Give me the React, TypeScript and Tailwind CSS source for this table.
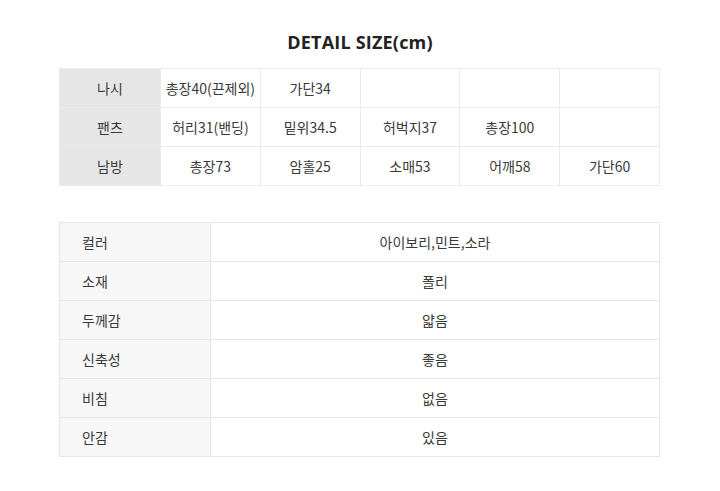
const sizeRows = [
  { name: '나시', cells: ['총장40(끈제외)', '가단34', '', '', ''] },
  { name: '팬츠', cells: ['허리31(밴딩)', '밑위34.5', '허벅지37', '총장100', ''] },
  { name: '남방', cells: ['총장73', '암홀25', '소매53', '어깨58', '가단60'] },
];

const infoRows = [
  ['컬러', '아이보리,민트,소라'],
  ['소재', '폴리'],
  ['두께감', '얇음'],
  ['신축성', '좋음'],
  ['비침', '없음'],
  ['안감', '있음'],
];

export default function App() {
  return (
    <div
      className="w-[720px] h-[491px] bg-white text-[#3a3a3a]"
      style={{ fontFamily: '"Noto Sans CJK KR", "Noto Sans", sans-serif' }}
    >
      <h1
        className="pt-[31px] h-[68px] text-center text-[18px] font-bold leading-[22px] tracking-[0.2px] text-[#222]"
        style={{ fontFamily: '"Open Sans", "Noto Sans CJK KR", sans-serif' }}
      >
        DETAIL SIZE(cm)
      </h1>

      <table className="ml-[59px] w-[601px] border-collapse table-fixed text-[14px]">
        <tbody>
          {sizeRows.map((row) => (
            <tr key={row.name} className="h-[39px]">
              <td className="w-[101px] bg-[#e6e6e6] border border-[#ebebeb] text-center">{row.name}</td>
              {row.cells.map((c, i) => (
                <td key={i} className="border border-[#ebebeb] text-center">
                  {c}
                </td>
              ))}
            </tr>
          ))}
        </tbody>
      </table>

      <table className="ml-[59px] mt-[36px] w-[601px] border-collapse table-fixed text-[14px]">
        <tbody>
          {infoRows.map(([k, v]) => (
            <tr key={k} className="h-[39px]">
              <td className="w-[151px] bg-[#f7f7f7] border border-[#e6e6e6] pl-[22px] text-left">{k}</td>
              <td className="border border-[#e6e6e6] text-center">{v}</td>
            </tr>
          ))}
        </tbody>
      </table>
    </div>
  );
}
